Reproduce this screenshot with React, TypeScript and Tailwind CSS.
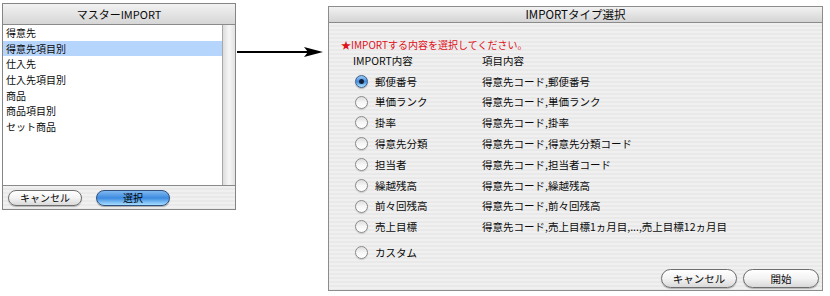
import React from "react";

const font = { fontFamily: '"Noto Sans CJK JP", "Noto Sans", sans-serif' };

function Radio({ on }: { on?: boolean }) {
  if (on) {
    return (
      <div className="w-[13px] h-[13px] shrink-0 rounded-full border border-[#3e5f8f] bg-gradient-to-b from-[#9cc8f2] via-[#3f8ee0] to-[#b4e6ff] flex items-center justify-center shadow-[0_1px_1px_rgba(0,0,0,0.25)]">
        <div className="w-[5px] h-[5px] rounded-full bg-[#15203a]" />
      </div>
    );
  }
  return (
    <div className="w-[13px] h-[13px] shrink-0 rounded-full border border-[#8a8a8a] bg-gradient-to-b from-[#dedede] via-[#f6f6f6] to-white shadow-[0_1px_1px_rgba(0,0,0,0.15)]" />
  );
}

function AquaButton({ label, w, blue }: { label: string; w: string; blue?: boolean }) {
  return (
    <div
      className={
        blue
          ? `${w} h-[16px] rounded-full border border-[#2f4f7f] bg-gradient-to-b from-[#7fb8ef] via-[#3b8be0] to-[#a6deff] flex items-center justify-center text-[10px] text-black shadow-[0_1px_1px_rgba(0,0,0,0.3)]`
          : `${w} h-[16px] rounded-full border border-[#6e6e6e] bg-gradient-to-b from-white via-[#f3f3f3] to-[#d9d9d9] flex items-center justify-center text-[10px] text-black shadow-[0_1px_1px_rgba(0,0,0,0.25)]`
      }
    >
      {label}
    </div>
  );
}

const listItems = ["得意先", "得意先項目別", "仕入先", "仕入先項目別", "商品", "商品項目別", "セット商品"];

const rows: [string, string, boolean][] = [
  ["郵便番号", "得意先コード,郵便番号", true],
  ["単価ランク", "得意先コード,単価ランク", false],
  ["掛率", "得意先コード,掛率", false],
  ["得意先分類", "得意先コード,得意先分類コード", false],
  ["担当者", "得意先コード,担当者コード", false],
  ["繰越残高", "得意先コード,繰越残高", false],
  ["前々回残高", "得意先コード,前々回残高", false],
  ["売上目標", "得意先コード,売上目標1ヵ月目,...,売上目標12ヵ月目", false],
];

const stripe =
  "bg-[repeating-linear-gradient(180deg,#f0f0f0_0px,#f0f0f0_2px,#e9e9e9_2px,#e9e9e9_4px)]";

export default function App() {
  return (
    <div className="relative w-[830px] h-[296px] bg-white text-[#0a0a0a]" style={font}>
      {/* Left window */}
      <div className="absolute left-[2px] top-[3px] w-[234px] h-[207px] border border-[#858585] flex flex-col bg-white">
        <div className="h-[21px] shrink-0 bg-gradient-to-b from-[#f2f2f2] to-[#d6d6d6] flex items-center justify-center text-[11px] border-b border-[#8a8a8a]">
          マスターIMPORT
        </div>
        <div className="h-[160px] shrink-0 flex">
          <div className="flex-1 flex flex-col bg-white">
            {listItems.map((t, i) => (
              <div
                key={t}
                className={`h-[15.7px] flex items-center pl-[3px] text-[10px] leading-none ${i === 1 ? "bg-[#b6d5fd]" : ""}`}
              >
                {t}
              </div>
            ))}
          </div>
          <div className="w-[13px] shrink-0 border-l border-[#a8a8a8] bg-gradient-to-r from-[#dcdcdc] via-[#f7f7f7] to-[#e2e2e2]" />
        </div>
        <div className={`flex-1 border-t border-[#8a8a8a] ${stripe} flex items-center pl-[5px] gap-[14px]`}>
          <AquaButton label="キャンセル" w="w-[74px]" />
          <AquaButton label="選択" w="w-[74px]" blue />
        </div>
      </div>

      {/* Arrow */}
      <svg className="absolute left-[236px] top-[44px]" width="90" height="16" viewBox="0 0 90 16">
        <line x1="1" y1="8" x2="74" y2="8" stroke="#000" strokeWidth="2" />
        <polygon points="87,8 68,3 72,8 68,13" fill="#000" />
      </svg>

      {/* Right window */}
      <div className={`absolute left-[328px] top-[6px] w-[495px] h-[285px] border border-[#8c8c8c] flex flex-col ${stripe}`}>
        <div className="h-[16px] shrink-0 bg-gradient-to-b from-[#f2f2f2] to-[#d4d4d4] flex items-center justify-center text-[11.5px] border-b border-[#8a8a8a]">
          IMPORTタイプ選択
        </div>
        <div className="flex-1 flex flex-col">
          <div className="mt-[14px] h-[14px] flex items-center pl-[12px] text-[10px] text-[#e0101a]">
            ★IMPORTする内容を選択してください。
          </div>
          <div className="mt-[3px] h-[14px] flex items-center pl-[24px] text-[10.5px]">
            <div className="w-[129px]">IMPORT内容</div>
            <div>項目内容</div>
          </div>
          <div className="mt-[3px] flex flex-col">
            {rows.map(([a, b, on]) => (
              <div key={a} className="h-[20.8px] flex items-center pl-[26px] text-[10.5px]">
                <Radio on={on} />
                <div className="ml-[7px] w-[107px]">{a}</div>
                <div>{b}</div>
              </div>
            ))}
          </div>
          <div className="mt-[5px] h-[20px] flex items-center pl-[26px] text-[10.5px]">
            <Radio />
            <div className="ml-[7px]">カスタム</div>
          </div>
          <div className="flex-1" />
          <div className="h-[19px] mb-[2px] flex justify-end gap-[6px] pr-[3px]">
            <div className="w-[76px] h-[19px] rounded-full border border-[#6e6e6e] bg-gradient-to-b from-white via-[#f3f3f3] to-[#d9d9d9] flex items-center justify-center text-[10.5px] shadow-[0_1px_1px_rgba(0,0,0,0.25)]">
              キャンセル
            </div>
            <div className="w-[76px] h-[19px] rounded-full border border-[#6e6e6e] bg-gradient-to-b from-white via-[#f3f3f3] to-[#d9d9d9] flex items-center justify-center text-[10.5px] shadow-[0_1px_1px_rgba(0,0,0,0.25)]">
              開始
            </div>
          </div>
        </div>
      </div>
    </div>
  );
}
